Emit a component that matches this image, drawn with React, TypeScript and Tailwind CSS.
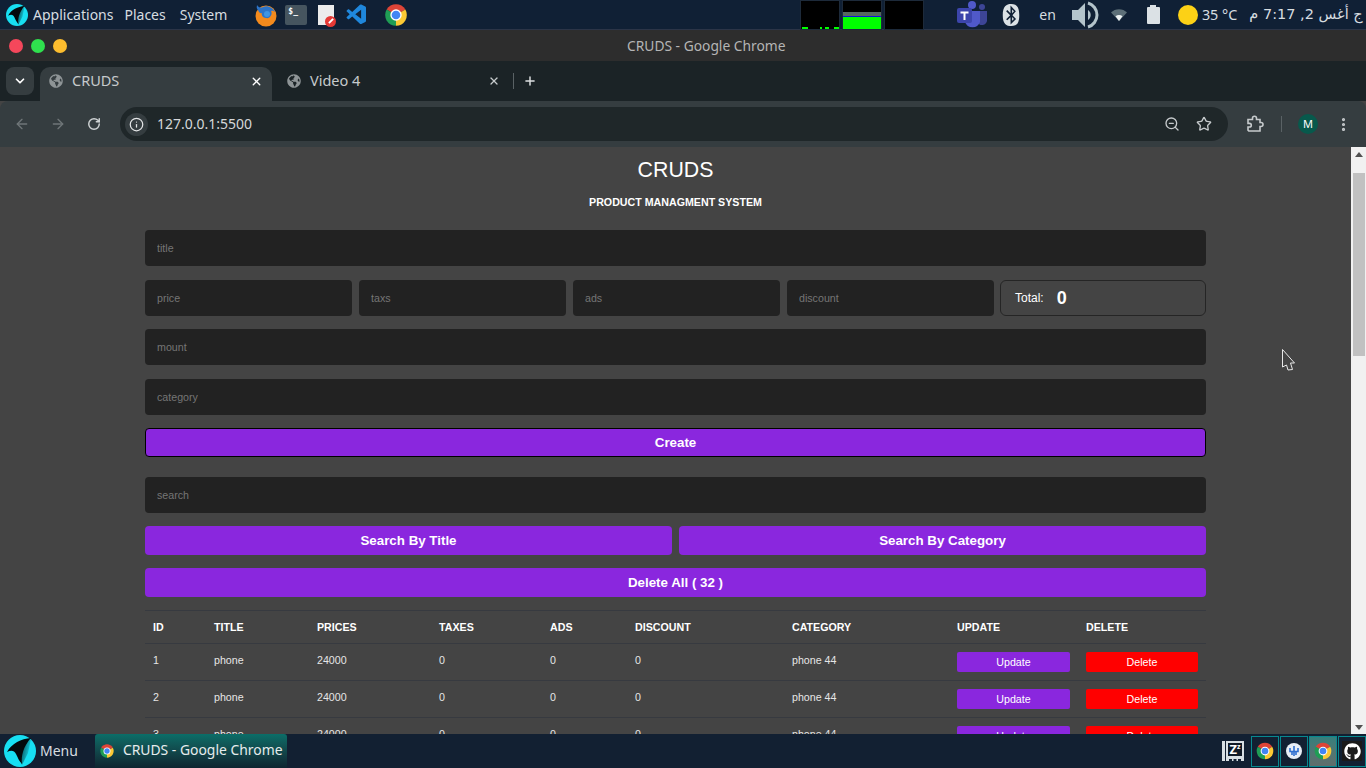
import { FaBluetooth, FaGithub, FaGlobeAmericas } from "react-icons/fa";
import { VscVscode } from "react-icons/vsc";
import {
  ArrowLeft,
  ArrowRight,
  ChevronDown,
  EllipsisVertical,
  Info,
  Plus,
  RotateCw,
  Star,
  X,
  ZoomOut,
} from "lucide-react";

const rows = [1, 2, 3];

const ChromeIcon = ({ size = 24 }: { size?: number }) => (
  <svg width={size} height={size} viewBox="0 0 48 48">
    <path d="M24 24L6.68 14A20 20 0 0 1 41.32 14Z" fill="#dd4437" />
    <path d="M24 24L41.32 14A20 20 0 0 1 24 44Z" fill="#fcc934" />
    <path d="M24 24L24 44A20 20 0 0 1 6.68 14Z" fill="#1f9d55" />
    <circle cx="24" cy="24" r="10.5" fill="#fff" />
    <circle cx="24" cy="24" r="8" fill="#4285f4" />
  </svg>
);

const Logo = ({ size = 24, id }: { size?: number; id: string }) => (
  <svg width={size} height={size} viewBox="0 0 32 32">
    <defs>
      <linearGradient id={id} x1="0.1" y1="0.3" x2="1" y2="0.6">
        <stop offset="0" stopColor="#03252c" />
        <stop offset="1" stopColor="#17dff2" />
      </linearGradient>
    </defs>
    <circle cx="16" cy="16" r="16" fill="#17dff2" />
    <path d="M12 14L27 4L24 18L18 30Z" fill={`url(#${id})`} />
    <path
      d="M27 3C17 4 8 8 3 17C7 15 10 15 12 19C14 23 15 26 18 29C17 21 19 12 27 3Z"
      fill="#03090c"
    />
  </svg>
);

const Monitor = ({ children }: { children?: React.ReactNode }) => (
  <div className="flex h-[30px] w-10 shrink-0 flex-col justify-end border border-[#1d2a3a] bg-black">
    {children}
  </div>
);

const TextInput = ({ placeholder, className }: { placeholder: string; className?: string }) => (
  <input
    placeholder={placeholder}
    className={`h-9 rounded bg-[#222222] px-3 text-[10.67px] text-white outline-none placeholder:text-[#757575] ${className ?? ""}`}
  />
);

const PurpleButton = ({ label, className }: { label: string; className?: string }) => (
  <button
    className={`h-[29px] rounded bg-[#8a27de] text-[13.33px] font-bold text-white ${className ?? ""}`}
  >
    {label}
  </button>
);

const TrayBox = ({ children, active }: { children: React.ReactNode; active?: boolean }) => (
  <div
    className={`flex h-[31px] w-[28px] items-center justify-center border border-[#07888f] ${
      active ? "bg-gradient-to-b from-[#357f7c] to-[#5f6d6b]" : ""
    }`}
  >
    {children}
  </div>
);

export default function App() {
  return (
    <div className="flex h-[768px] w-[1366px] flex-col overflow-hidden bg-[#444444] font-['Noto_Sans',sans-serif]">
      {/* desktop panel */}
      <div className="flex h-[30px] shrink-0 items-center border-b border-[#2b3447] bg-[#102035] text-[14px] text-[#d7dde0]">
        <div className="ml-[6px]">
          <Logo id="logoTop" size={22} />
        </div>
        <span className="ml-[5px]">Applications</span>
        <span className="ml-[11px]">Places</span>
        <span className="ml-[14px]">System</span>
        <div className="ml-[27px] flex shrink-0 items-center">
          <svg width="24" height="24" viewBox="0 0 24 24">
            <circle cx="12" cy="13" r="10.5" fill="#f38a1d" />
            <path d="M4 7C2 5 3 3 3 2C5 5 7 5 9 4C14 2 19 5 21 9C19 7 17 8 17 8C19 11 16 16 12 15C9 15 7 12 8 10C6 11 5 9 4 7Z" fill="#2c74c9" />
            <circle cx="13" cy="11" r="3" fill="#3f95e3" />
          </svg>
          <div className="ml-[7px] h-5 w-[22px] rounded-[2px] bg-[#46555f] pl-[3px] font-['DejaVu_Sans_Mono',monospace] text-[8px] leading-[13px] font-bold text-white">
            $_
          </div>
          <div className="relative ml-[11px] h-5 w-4 bg-[#ececec]">
            <div className="absolute -right-[2px] -bottom-[2px] flex h-[11px] w-[11px] items-center justify-center rounded-full bg-[#e53935]">
              <div className="h-[2px] w-[6px] -rotate-45 bg-white" />
            </div>
          </div>
          <VscVscode className="ml-[11px] text-[24px] text-[#1f87dc]" />
          <div className="ml-[14px]">
            <ChromeIcon size={26} />
          </div>
        </div>
        <div className="ml-[391px] flex shrink-0 gap-[2px] self-start">
          <Monitor>
            <div className="flex h-[2px] gap-[3px]">
              <div className="ml-[1px] w-[6px] bg-[#00ff00]" />
              <div className="ml-[9px] w-[3px] bg-[#00ff00]" />
              <div className="w-[4px] bg-[#00ff00]" />
              <div className="ml-[2px] w-[6px] bg-[#00ff00]" />
            </div>
          </Monitor>
          <Monitor>
            <div className="h-[4px] bg-[#56675f]" />
            <div className="h-[1px] bg-[#1010e0]" />
            <div className="h-[12px] bg-[#00ff00]" />
          </Monitor>
          <Monitor />
        </div>
        <svg className="ml-[32px] shrink-0" width="32" height="30" viewBox="0 0 32 30">
          <circle cx="16" cy="5" r="4" fill="#5059c9" />
          <circle cx="26" cy="7" r="3" fill="#3d4596" />
          <path d="M20 11H31V19A5 5 0 0 1 21 21Z" fill="#3d4596" />
          <path d="M9 11H24V22A8 8 0 0 1 9 22Z" fill="#5059c9" />
          <rect x="1" y="8" width="15" height="15" rx="2" fill="#3c45ab" />
          <path d="M4.5 11.5H12.5V13.5H9.5V20H7.5V13.5H4.5Z" fill="#fff" />
        </svg>
        <FaBluetooth className="ml-[12px] shrink-0 text-[22px] text-[#dbe1e5]" />
        <span className="ml-[17px] text-[14px]">en</span>
        <svg className="ml-[15px] shrink-0" width="30" height="30" viewBox="0 0 30 30">
          <path d="M1 10H7L14 3V27L7 20H1Z" fill="#b4c4cb" />
          <path d="M17 10A6 6 0 0 1 17 20Z" fill="#b4c4cb" />
          <path d="M17 3A12.5 12.5 0 0 1 17 27" fill="none" stroke="#b4c4cb" strokeWidth="3" />
        </svg>
        <svg className="ml-[10px] shrink-0" width="16" height="12" viewBox="0 0 16 12">
          <path d="M0 3.5C4 -1 12 -1 16 3.5L8 12Z" fill="#5d6f78" />
          <path d="M4.5 7.2C6.5 5.5 9.5 5.5 11.5 7.2L8 12Z" fill="#eef2f3" />
        </svg>
        <div className="ml-[20px] flex shrink-0 flex-col items-center">
          <div className="h-[2px] w-[6px] bg-[#dbe1e5]" />
          <div className="h-[17px] w-[13px] rounded-[1px] bg-[#dbe1e5]" />
        </div>
        <div className="ml-[18px] h-5 w-5 shrink-0 rounded-full bg-[#fcd116]" />
        <span className="ml-[4px] text-[14.4px] whitespace-nowrap">35 °C</span>
        <span
          dir="rtl"
          className="ml-[12px] font-['DejaVu_Sans',sans-serif] text-[14.5px] whitespace-nowrap"
        >
          ج أغس 2, 7:17 م
        </span>
      </div>

      {/* window title bar */}
      <div className="relative flex h-[31px] shrink-0 items-center bg-[#2d2d2d] pl-[9px]">
        <div className="flex gap-[8px]">
          <div className="h-[14px] w-[14px] rounded-full bg-[#f5475b]" />
          <div className="h-[14px] w-[14px] rounded-full bg-[#2fe04e]" />
          <div className="h-[14px] w-[14px] rounded-full bg-[#fdbd2e]" />
        </div>
        <span className="ml-[560px] pt-[2px] text-[13.8px] text-[#b5b5b5]">CRUDS - Google Chrome</span>
      </div>

      {/* tab strip */}
      <div className="flex h-[40px] shrink-0 items-end bg-[#1b2326] pl-[6px] text-[14.5px] text-[#c6cacc]">
        <div className="mb-[6px] flex h-[28px] w-[28px] items-center justify-center rounded-lg bg-[#353d40]">
          <ChevronDown size={14} strokeWidth={3} className="text-white" />
        </div>
        <div className="ml-[6px] flex h-[34px] w-[232px] items-center rounded-t-[10px] bg-[#353d40] pr-[9px] pb-[6px] pl-[9px]">
          <FaGlobeAmericas size={14} className="text-[#8e9496]" />
          <span className="ml-[9px] flex-1">CRUDS</span>
          <X size={13} strokeWidth={2.5} className="text-white" />
        </div>
        <div className="flex h-[34px] w-[240px] items-center pr-[12px] pb-[6px] pl-[15px]">
          <FaGlobeAmericas size={14} className="text-[#8e9496]" />
          <span className="ml-[9px] flex-1">Video 4</span>
          <X size={12} strokeWidth={2.5} className="text-[#c6cacc]" />
        </div>
        <div className="mb-[12px] ml-[1px] h-[16px] w-px bg-[#5a6265]" />
        <Plus size={14} strokeWidth={2.5} className="mb-[13px] ml-[9px] text-[#dde0e1]" />
      </div>

      {/* toolbar */}
      <div className="flex h-[46px] shrink-0 items-center rounded-t-lg bg-[#353d40] px-[14px] text-[#c6cacc]">
        <ArrowLeft size={16} className="shrink-0 text-[#6f7678]" />
        <ArrowRight size={16} className="ml-[20px] shrink-0 text-[#6f7678]" />
        <RotateCw size={14} strokeWidth={2.5} className="ml-[21px] shrink-0 text-[#cfd3d4]" />
        <div className="ml-[19px] flex h-[34px] w-[1108px] shrink-0 items-center rounded-full bg-[#1f2729] pr-[16px] pl-[5px]">
          <div className="flex h-[23px] w-[23px] items-center justify-center rounded-full bg-[#353d40]">
            <Info size={15} strokeWidth={2} className="text-[#e3e5e6]" />
          </div>
          <span className="ml-[9px] flex-1 pb-[2px] text-[14px] text-[#d5d8da]">127.0.0.1:5500</span>
          <ZoomOut size={16} className="text-[#c6cacc]" />
          <Star size={16} strokeWidth={2} className="ml-[16px] text-[#c6cacc]" />
        </div>
        <svg className="ml-[18px] shrink-0" width="18" height="18" viewBox="0 0 18 18" fill="none" stroke="#c6cacc" strokeWidth="1.6">
          <path d="M2 4.5H6.5V3.2A2 2 0 0 1 10.5 3.2V4.5H14V7.5H15A2 2 0 0 1 15 11.5H14V16H2.8L2 15.2V12H3.5A1.8 1.8 0 0 0 3.5 8.4H2Z" />
        </svg>
        <div className="ml-[17px] h-[16px] w-px shrink-0 bg-[#5a6265]" />
        <div className="ml-[16px] flex h-5 w-5 shrink-0 items-center justify-center rounded-full bg-[#07594c] text-[11px] text-white">
          M
        </div>
        <EllipsisVertical size={17} strokeWidth={2.5} className="ml-[17px] shrink-0" />
      </div>

      {/* page */}
      <div className="relative flex min-h-0 flex-1 font-['Liberation_Sans',Arial,sans-serif]">
        <div className="min-w-0 flex-1 overflow-hidden">
          <div className="mx-auto flex w-[1061px] flex-col">
            <h1 className="mt-[9px] text-center text-[21.33px] leading-[28px] text-white">CRUDS</h1>
            <p className="mt-[12px] text-center text-[10.67px] leading-[13px] font-bold text-white uppercase">
              Product Managment System
            </p>
            <TextInput placeholder="title" className="mt-[21px]" />
            <div className="mt-[14px] flex gap-[7px]">
              <TextInput placeholder="price" className="w-[207px]" />
              <TextInput placeholder="taxs" className="w-[207px]" />
              <TextInput placeholder="ads" className="w-[207px]" />
              <TextInput placeholder="discount" className="w-[207px]" />
              <div className="-ml-[1px] flex h-9 flex-1 items-center rounded-md border border-[#252525] pl-[14px] text-white">
                <span className="text-[12px]">Total:</span>
                <span className="ml-[13px] text-[18px] font-bold">0</span>
              </div>
            </div>
            <TextInput placeholder="mount" className="mt-[13px]" />
            <TextInput placeholder="category" className="mt-[14px]" />
            <PurpleButton label="Create" className="mt-[13px] border border-black" />
            <TextInput placeholder="search" className="mt-[20px]" />
            <div className="mt-[13px] flex gap-[7px]">
              <PurpleButton label="Search By Title" className="flex-1" />
              <PurpleButton label="Search By Category" className="flex-1" />
            </div>
            <PurpleButton label="Delete All ( 32 )" className="mt-[13px]" />
            <table className="mt-[13px] w-full table-fixed border-t border-[#373a40] text-left text-[10.67px] text-white">
              <thead>
                <tr className="h-[33px] border-b border-[#373a40] uppercase">
                  <th className="w-[61px] pl-2 font-bold">Id</th>
                  <th className="w-[103px] pl-2 font-bold">Title</th>
                  <th className="w-[122px] pl-2 font-bold">Prices</th>
                  <th className="w-[111px] pl-2 font-bold">Taxes</th>
                  <th className="w-[85px] pl-2 font-bold">Ads</th>
                  <th className="w-[157px] pl-2 font-bold">Discount</th>
                  <th className="w-[165px] pl-2 font-bold">Category</th>
                  <th className="w-[129px] pl-2 font-bold">Update</th>
                  <th className="pl-2 font-bold">Delete</th>
                </tr>
              </thead>
              <tbody className="text-[#e6e6e6]">
                {rows.map((id) => (
                  <tr key={id} className="h-[37px] border-b border-[#373a40]">
                    <td className="pb-[4px] pl-2">{id}</td>
                    <td className="pb-[4px] pl-2">phone</td>
                    <td className="pb-[4px] pl-2">24000</td>
                    <td className="pb-[4px] pl-2">0</td>
                    <td className="pb-[4px] pl-2">0</td>
                    <td className="pb-[4px] pl-2">0</td>
                    <td className="pb-[4px] pl-2">phone 44</td>
                    <td className="pl-2">
                      <button className="block h-5 w-[113px] rounded-[2px] bg-[#8a27de] text-white">
                        Update
                      </button>
                    </td>
                    <td className="pl-2">
                      <button className="block h-5 w-[112px] rounded-[2px] bg-[#ff0000] text-white">
                        Delete
                      </button>
                    </td>
                  </tr>
                ))}
              </tbody>
            </table>
          </div>
        </div>

        {/* scrollbar */}
        <div className="flex w-[15px] shrink-0 flex-col items-center bg-[#f1f1f1] pt-[5px] pb-[4px]">
          <div className="h-0 w-0 border-x-[4px] border-b-[5px] border-x-transparent border-b-[#505050]" />
          <div className="mt-[16px] h-[183px] w-[12px] bg-[#c1c1c1]" />
          <div className="mt-auto h-0 w-0 border-x-[4px] border-t-[5px] border-x-transparent border-t-[#505050]" />
        </div>

        {/* mouse cursor */}
        <svg className="absolute top-[202px] left-[1282px]" width="14" height="22" viewBox="0 0 14 22">
          <path d="M0.5 0.5L12.5 14L8.5 14L10.5 20.5L6 21L4.5 16L0.5 18Z" fill="#444444" stroke="#e8e8e8" />
        </svg>
      </div>

      {/* taskbar */}
      <div className="flex h-[34px] shrink-0 items-center bg-[#122032] text-[14px] text-[#d7dde0]">
        <div className="ml-[4px]">
          <Logo id="logoBottom" size={32} />
        </div>
        <span className="ml-[4px] pb-[1px]">Menu</span>
        <div className="ml-[17px] flex h-[34px] w-[192px] items-center rounded-t-[3px] bg-gradient-to-b from-[#0b6e68] to-[#0e2530] pl-[4px]">
          <ChromeIcon size={16} />
          <span className="ml-[8px] pb-[1px] text-[13.9px] whitespace-nowrap text-[#e6eced]">CRUDS - Google Chrome</span>
        </div>
        <div className="ml-auto flex items-center">
          {/* sleep indicator */}
          <div className="mr-[7px] flex h-[20px] items-stretch">
            <div className="w-[3px] bg-[#d8dfe3]" />
            <div className="ml-[1px] flex w-[18px] flex-col">
              <div className="flex h-[15px] items-start justify-center border-x-2 border-t-2 border-[#d8dfe3] bg-[#101a26] font-bold text-white">
                <span className="text-[13px] leading-[13px]">Z</span>
                <span className="text-[7px] leading-[8px]">z</span>
              </div>
              <svg width="18" height="5" viewBox="0 0 18 5">
                <path d="M0 0H18V5H15V3H12V5H10.5V3H7.5V5H6V3H3V5H0Z" fill="#d8dfe3" />
              </svg>
            </div>
          </div>
          <div className="flex gap-px">
            <TrayBox>
              <ChromeIcon size={20} />
            </TrayBox>
            <TrayBox>
              <svg width="18" height="18" viewBox="0 0 18 18">
                <circle cx="9" cy="9" r="8" fill="#e8eef6" />
                <path d="M9 4V14M5 6V9.5H13V6M7 10V13M11 10V13" fill="none" stroke="#2f6fd0" strokeWidth="1.6" />
              </svg>
            </TrayBox>
            <TrayBox active>
              <ChromeIcon size={20} />
            </TrayBox>
            <TrayBox>
              <div className="flex h-[20px] w-[20px] items-center justify-center bg-[#1a1a1a]">
                <FaGithub className="text-[17px] text-white" />
              </div>
            </TrayBox>
          </div>
        </div>
      </div>
    </div>
  );
}
